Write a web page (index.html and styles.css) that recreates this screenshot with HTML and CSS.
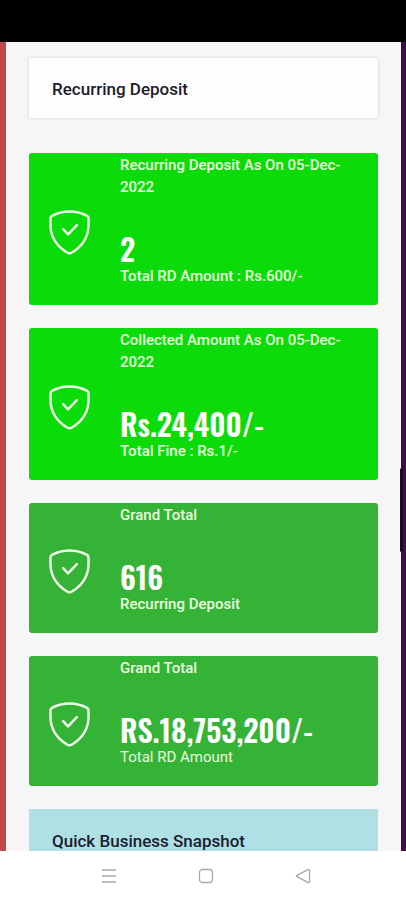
FILE: index.html
```
<!DOCTYPE html>
<html lang="en">
  <head>
    <meta charset="UTF-8" />
    <meta name="viewport" content="width=device-width, initial-scale=1.0" />
    <title>Recurring Deposit</title>
    <link rel="stylesheet" href="styles.css">
  </head>
  <body>
    <svg class="sprite" aria-hidden="true">
      <symbol id="shield" viewBox="0 0 42 46">
        <path d="M21 1.5C14.5 1.5 8 3.200 3 6C1.700 6.700 1.500 7.500 1.500 9V15C1.500 28 8 37 18.500 43.500C20.300 44.700 21.700 44.700 23.500 43.500C34 37 40.500 28 40.500 15V9C40.500 7.500 40.300 6.700 39 6C34 3.200 27.500 1.500 21 1.500Z" />
        <path d="M14.500 19.500L19.500 25L28.500 15.500" />
      </symbol>
    </svg>

    <div class="status-bar"></div>

    <main class="screen">
      <header class="title-card">
        <h1>Recurring Deposit</h1>
      </header>

      <section class="stat bright">
        <svg class="stat-icon"><use href="#shield" /></svg>
        <div class="stat-body">
          <h2>Recurring Deposit As On 05-Dec-2022</h2>
          <p class="value">2</p>
          <p class="note">Total RD Amount : Rs.600/-</p>
        </div>
      </section>

      <section class="stat bright">
        <svg class="stat-icon"><use href="#shield" /></svg>
        <div class="stat-body">
          <h2>Collected Amount As On 05-Dec-2022</h2>
          <p class="value">Rs.24,400/-</p>
          <p class="note">Total Fine : Rs.1/-</p>
        </div>
      </section>

      <section class="stat">
        <svg class="stat-icon"><use href="#shield" /></svg>
        <div class="stat-body">
          <h2>Grand Total</h2>
          <p class="value">616</p>
          <p class="note">Recurring Deposit</p>
        </div>
      </section>

      <section class="stat">
        <svg class="stat-icon"><use href="#shield" /></svg>
        <div class="stat-body">
          <h2>Grand Total</h2>
          <p class="value">RS.18,753,200/-</p>
          <p class="note light">Total RD Amount</p>
        </div>
      </section>

      <section class="snapshot">
        <h2>Quick Business Snapshot</h2>
      </section>
    </main>

    <div class="edge-handle"></div>

    <nav class="nav-bar">
      <button type="button" aria-label="Recent apps">
        <svg viewBox="0 0 16 16"><path d="M1 2H15M1 8H15M1 14H15" /></svg>
      </button>
      <button type="button" aria-label="Home">
        <svg viewBox="0 0 16 16"><rect x="1.500" y="1.500" width="13" height="13" rx="3" /></svg>
      </button>
      <button type="button" aria-label="Back">
        <svg viewBox="0 0 16 16"><path d="M2 7.300L12.800 1.700Q14.500 1 14.500 2.800V13.200Q14.500 15 12.800 14.300L2 8.700Q.8 8 2 7.300Z" /></svg>
      </button>
    </nav>
  </body>
</html>
```
FILE: styles.css
```
* {
  box-sizing: border-box;
}

body {
  margin: 0;
  height: 100vh;
  display: flex;
  flex-direction: column;
  font-family: Roboto, Arial, sans-serif;
  background: #fff;
}

h1,
h2,
p {
  margin: 0;
}

.sprite {
  display: none;
}

.status-bar {
  flex: none;
  height: 42px;
  background: #000;
}

.screen {
  flex: 1;
  min-height: 0;
  overflow-y: auto;
  scrollbar-width: none;
  padding: 16px 23px 0;
  background: #f6f6f6;
  border-left: 6px solid #c1484b;
  border-right: 5px solid #3f0d49;
}

.title-card {
  padding: 19px 23px 17px;
  margin-bottom: 35px;
  background: #fdfdfd;
  border-radius: 2px;
  box-shadow: 0 0 3px rgba(0, 0, 0, 0.18);
}

.title-card h1,
.snapshot h2 {
  font-size: 17px;
  line-height: 24px;
  font-weight: 500;
  color: #1c1c30;
}

.stat {
  display: flex;
  align-items: center;
  gap: 30px;
  margin-bottom: 23px;
  padding: 0 24px 0 20px;
  background: #35b336;
  border-radius: 3px;
  color: #fff;
}

.stat.bright {
  background: #0adb09;
}

.stat-icon {
  flex: none;
  width: 41px;
  height: 45px;
  margin-top: 6px;
  fill: none;
  stroke: #f0ffe9;
  stroke-width: 2.5;
  stroke-linecap: round;
  stroke-linejoin: round;
}

.stat-body {
  flex: 1;
  padding: 1px 0 18px;
}

.stat h2 {
  margin-bottom: 35px;
  font-size: 15px;
  line-height: 22px;
  font-weight: 500;
  color: #eaffdf;
}

.value {
  font-family: Oswald, "Roboto Condensed", Roboto, sans-serif;
  font-size: 30px;
  line-height: 32px;
  font-weight: 600;
}

.note {
  font-size: 15px;
  line-height: 22px;
  font-weight: 500;
  color: #eaffdf;
}

.note.light {
  font-weight: 400;
}

.snapshot {
  padding: 20px 23px;
  background: #aee0e5;
}

/* side panel handle, floats over the right edge */
.edge-handle {
  position: absolute;
  top: 52%;
  right: 3px;
  width: 3px;
  height: 84px;
  border-radius: 2px;
  background: #1d0926;
}

.nav-bar {
  flex: none;
  display: flex;
  justify-content: center;
  gap: 65px;
  height: 49px;
  padding-left: 6px;
  background: #fff;
}

.nav-bar button {
  display: flex;
  align-items: center;
  justify-content: center;
  width: 32px;
  padding: 0;
  border: none;
  background: none;
}

.nav-bar svg {
  width: 16px;
  height: 16px;
  fill: none;
  stroke: #a8a8a8;
  stroke-width: 1.3;
}
```
